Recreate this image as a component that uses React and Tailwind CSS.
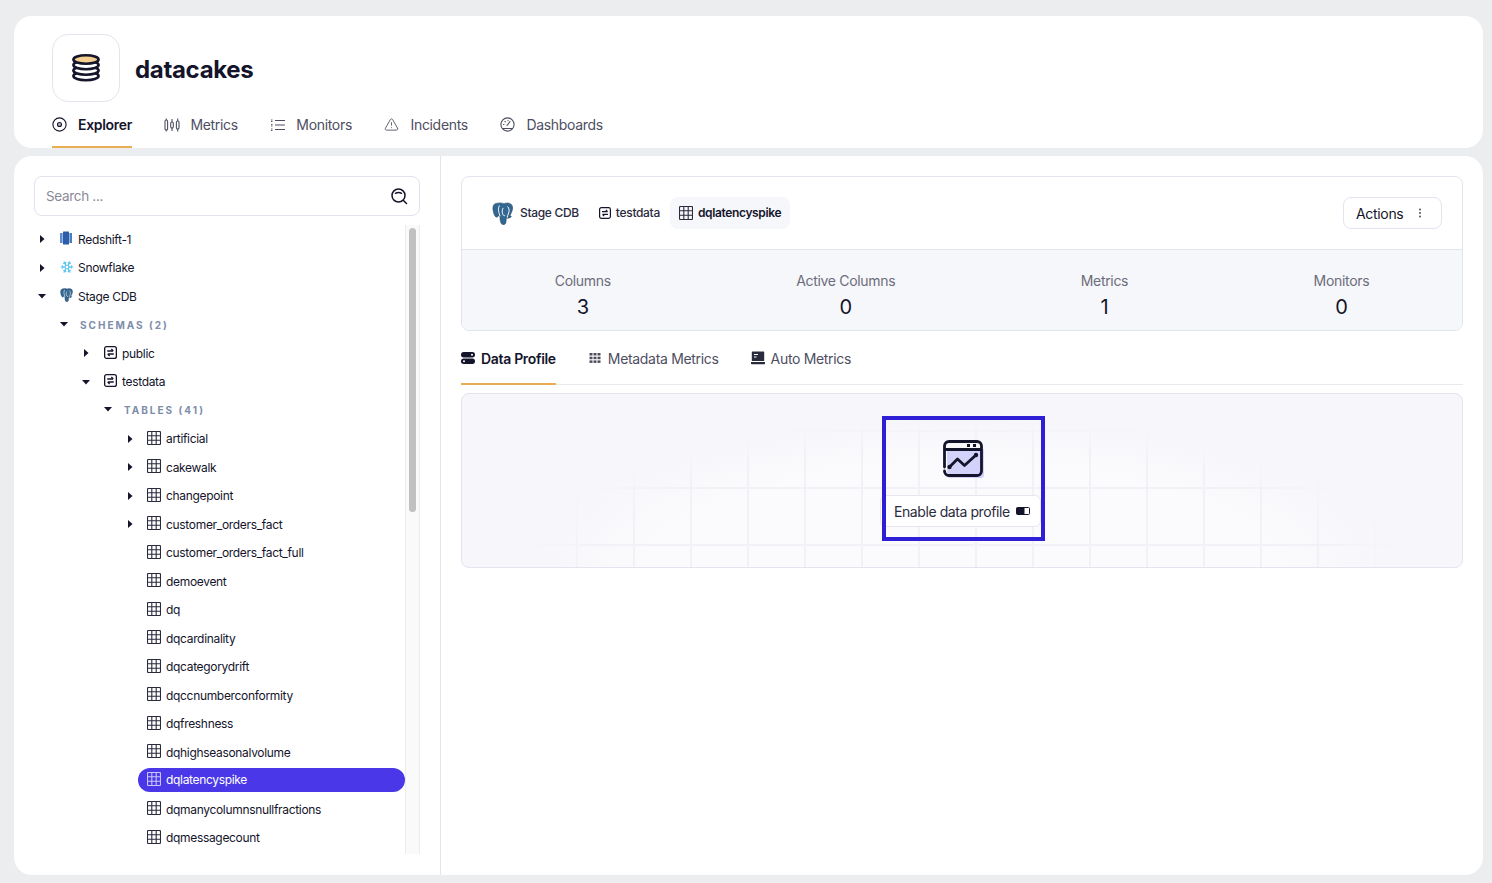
import { Snowflake, TriangleAlert } from "lucide-react";

const tables = [
  { name: "artificial", caret: true },
  { name: "cakewalk", caret: true },
  { name: "changepoint", caret: true },
  { name: "customer_orders_fact", caret: true },
  { name: "customer_orders_fact_full" },
  { name: "demoevent" },
  { name: "dq" },
  { name: "dqcardinality" },
  { name: "dqcategorydrift" },
  { name: "dqccnumberconformity" },
  { name: "dqfreshness" },
  { name: "dqhighseasonalvolume" },
  { name: "dqlatencyspike", active: true },
  { name: "dqmanycolumnsnullfractions" },
  { name: "dqmessagecount" },
];

const stats = [
  { label: "Columns", value: 3 },
  { label: "Active Columns", value: 0 },
  { label: "Metrics", value: 1 },
  { label: "Monitors", value: 0 },
];

const LogoIcon = () => (
  <svg width="30" height="30" viewBox="0 0 30 30" fill="none" stroke="#14142b" strokeWidth="2.6">
    <ellipse cx="15" cy="23" rx="12.600" ry="4.200" fill="#fff" />
    <ellipse cx="15" cy="17.500" rx="12.600" ry="4.200" fill="#fff" />
    <ellipse cx="15" cy="12" rx="12.600" ry="4.200" fill="#fff" />
    <ellipse cx="15" cy="6.500" rx="12.600" ry="4.200" fill="#f3d08f" />
  </svg>
);

const ExplorerIcon = () => (
  <svg width="15" height="15" viewBox="0 0 15 15" fill="none" stroke="#14142b" strokeWidth="1.100">
    <circle cx="7.500" cy="7.500" r="6.600" />
    <circle cx="7.500" cy="7.500" r="2" fill="#14142b" fillOpacity="0.300" />
  </svg>
);

const MetricsIcon = () => (
  <svg width="16" height="16" viewBox="0 0 16 16" fill="none" stroke="#4e4e5f" strokeWidth="1.100">
    <rect x="1" y="3" width="2.600" height="10" rx="1.300" />
    <path d="M2.300 1.500V3M2.300 13v1.500M8 2v3M8 11v3M13.700 1.500V4M13.700 12v2.500" />
    <rect x="6.700" y="5" width="2.600" height="6" rx="1.300" />
    <rect x="12.400" y="4" width="2.600" height="8" rx="1.300" />
  </svg>
);

const MonitorsIcon = () => (
  <svg width="16" height="16" viewBox="0 0 16 16" fill="none" stroke="#4e4e5f" strokeWidth="1.100">
    <path d="M5 3.500h10M5 8h10M5 12.500h10" />
    <path d="M1 3h1.500M1 4.500h1.500M1 7.500h1.500M1 9h1.500M1 12h1.500M1 13.500h1.500" strokeWidth="0.900" />
  </svg>
);

const GaugeIcon = () => (
  <svg width="15" height="15" viewBox="0 0 15 15" fill="none" stroke="#4e4e5f" strokeWidth="1.100" strokeLinecap="round">
    <circle cx="7.500" cy="7.500" r="6.600" />
    <path d="M2.500 11.500h10" />
    <path d="M7 8.500l3-4M3.500 7.500h.5M5 4.500l.3.300M8 3.300v.3" />
  </svg>
);

const SearchIcon = () => (
  <svg width="18" height="18" viewBox="0 0 18 18" fill="none" stroke="#14142b" strokeWidth="1.500" strokeLinecap="round">
    <circle cx="8.500" cy="8.500" r="6.500" />
    <path d="M5.500 6.300c1.500-1.100 4.500-1.100 6 0M13.500 13.500l3 3" />
  </svg>
);

const Caret = ({ open }) => (
  <svg width="8" height="8" viewBox="0 0 8 8" fill="#14142b">
    {open ? <path d="M0 2h8L4 6.500z" /> : <path d="M2 0l4.500 4L2 8z" />}
  </svg>
);

const RedshiftIcon = () => (
  <svg width="12" height="14" viewBox="0 0 12 14">
    <rect x="0" y="2" width="2.600" height="10" fill="#5b8ed0" />
    <rect x="3" y="0.500" width="6" height="13" rx="0.500" fill="#2b5da8" />
    <rect x="9.400" y="2" width="2.600" height="10" fill="#4a7cc4" />
  </svg>
);

const PostgresIcon = ({ size = 14 }) => (
  <svg width={size} height={size} viewBox="0 0 24 24">
    <path
      d="M4 1.500C1.800 2 .5 4.500 1 8c.5 3 1.600 7 3.300 7.700 1 .4 1.900-.4 2.500-1.400.4.500 1 .8 1.600.9-.2 2.700.2 6 1.400 7.500 1.300 1.500 3.900 1.300 4.600-.8.300-1 .4-3 .5-4.900 2 .2 3.700-.3 5-1.400.8-.700-.2-1.200-1.300-1 1-2.200 3-5.500 3-8.300 0-3.500-2.500-5.300-5.500-5.300-1.400 0-2.700.3-3.600.7C10.500.7 7 .7 4 1.500z"
      fill="#336791"
      stroke="#1f3f5e"
      strokeWidth="0.500"
    />
    <path
      d="M7.500 4c-1 2-1 5.500 0 8 .3 1 .6 2 .8 2.500M16.500 5c1.500 1.500 2 4.500.5 7.500-.7 1.300-.9 2.300-1 3.500M11.500 6.500c-1 1.500-1.200 4-.2 6.500.4 1 1 1.500 2 1.300"
      fill="none"
      stroke="#fff"
      strokeWidth="1"
      strokeLinecap="round"
    />
  </svg>
);

const SchemaIcon = ({ size = 13 }) => (
  <svg width={size} height={size} viewBox="0 0 12 12" fill="none" stroke="#14142b" strokeWidth="1.200">
    <rect x="0.600" y="0.600" width="10.800" height="10.800" rx="1.800" />
    <path d="M3 4.600h5.500M6.800 2.800l1.800 1.800M9 7.400H3.500M5.200 9.200L3.400 7.400" strokeWidth="1.200" />
  </svg>
);

const TableIcon = ({ color = "#2a2a3d", size = 14 }) => (
  <svg width={size} height={size} viewBox="0 0 14 14" fill="none" stroke={color} strokeWidth="1.100">
    <rect x="0.500" y="0.500" width="13" height="13" rx="1" />
    <path d="M0.500 4.800h13M0.500 9.200h13M4.800 0.500v13M9.200 0.500v13" />
  </svg>
);

const ServerIcon = () => (
  <svg width="14" height="14" viewBox="0 0 14 14" fill="#14142b">
    <rect x="0" y="1" width="14" height="5.500" rx="2.700" />
    <rect x="0" y="7.500" width="14" height="5.500" rx="2.700" />
    <circle cx="11" cy="3.700" r="1" fill="#fff" />
    <circle cx="3" cy="10.300" r="1" fill="#fff" />
  </svg>
);

const DotsGridIcon = () => (
  <svg width="12" height="12" viewBox="0 0 12 12" fill="#4e4e5f">
    <rect x="0.500" y="1" width="3" height="2.500" />
    <rect x="4.500" y="1" width="3" height="2.500" />
    <rect x="8.500" y="1" width="3" height="2.500" />
    <rect x="0.500" y="4.700" width="3" height="2.500" />
    <rect x="4.500" y="4.700" width="3" height="2.500" />
    <rect x="8.500" y="4.700" width="3" height="2.500" />
    <rect x="0.500" y="8.400" width="3" height="2.500" />
    <rect x="4.500" y="8.400" width="3" height="2.500" />
    <rect x="8.500" y="8.400" width="3" height="2.500" />
  </svg>
);

const AutoIcon = () => (
  <svg width="14" height="14" viewBox="0 0 14 14" fill="#2a2a3d">
    <path d="M1.500 0.500h11a.7.7 0 0 1 .7.7V10H.8V1.200a.7.7 0 0 1 .7-.7z" />
    <path d="M0 11h14v1.500a.7.7 0 0 1-.7.7H.7a.7.7 0 0 1-.7-.7z" />
    <path d="M3 3.500h4M3 6h2.500" stroke="#fff" strokeWidth="1.200" />
  </svg>
);

const ProfileIcon = () => (
  <svg width="42" height="39" viewBox="0 0 42 39" fill="none">
    <rect x="4" y="8" width="37" height="30" rx="3" fill="#d2d2fb" />
    <path
      d="M1.500 27V6a4.500 4.500 0 0 1 4.500-4.500h28A4.500 4.500 0 0 1 38.500 6v25a4.500 4.500 0 0 1-4.500 4.500H6A4.500 4.500 0 0 1 1.500 31"
      stroke="#14142b"
      strokeWidth="2.800"
      strokeLinecap="round"
    />
    <path d="M1.500 9.500h37" stroke="#14142b" strokeWidth="2.800" />
    <path d="M24 5.500h3M30 5.500h3" stroke="#14142b" strokeWidth="2.800" />
    <path
      d="M6.500 27l8-8 7 6.500L33 15"
      stroke="#14142b"
      strokeWidth="2.800"
      strokeLinecap="round"
      strokeLinejoin="round"
    />
    <circle cx="6.500" cy="27" r="2.200" fill="#14142b" />
    <circle cx="33" cy="15" r="2.200" fill="#14142b" />
  </svg>
);

const ToggleIcon = () => (
  <svg width="14" height="8" viewBox="0 0 14 8">
    <rect x="0.500" y="0.500" width="13" height="7" rx="1" fill="#fff" stroke="#14142b" />
    <rect x="0.500" y="0.500" width="8" height="7" rx="1" fill="#14142b" />
  </svg>
);

const NavItem = ({ icon, label, active }) => (
  <div
    className={`flex h-[38px] items-center gap-[10px] border-b-2 pb-[7px] text-[14px] ${
      active ? "border-[#e9ae52] font-semibold text-[#14142b]" : "border-transparent text-[#4e4e5f]"
    }`}
  >
    <div className="flex w-4 shrink-0 items-center">{icon}</div>
    <span>{label}</span>
  </div>
);

const TreeRow = ({ indent, caret, open, icon, label }) => (
  <div className={`flex h-[28.5px] shrink-0 items-center ${indent}`}>
    <div className="flex w-4 shrink-0 items-center justify-center">
      {caret && <Caret open={open} />}
    </div>
    <div className="-mt-[2px] ml-[10px] flex w-[18px] shrink-0 items-center">{icon}</div>
    <span className="mt-[1px] text-[12px] text-[#14142b]">{label}</span>
  </div>
);

const SectionRow = ({ indent, label }) => (
  <div className={`flex h-[28.5px] shrink-0 items-center ${indent}`}>
    <div className="mb-[2px] flex w-4 shrink-0 items-center justify-center">
      <Caret open />
    </div>
    <span className="ml-2 mt-[1px] text-[10px] font-bold tracking-[0.2em] text-[#7d8ca8]">{label}</span>
  </div>
);

const TableRow = ({ name, caret, active }) => (
  <div className="flex h-[28.5px] shrink-0 items-center pl-[88px]">
    <div className="flex w-4 shrink-0 items-center justify-center">{caret && <Caret />}</div>
    <div
      className={`flex h-6 flex-1 items-center gap-[5px] rounded-full pl-[9px] text-[12px] ${
        active ? "mb-[2px] bg-[#4a37e8] text-white" : "text-[#14142b]"
      }`}
    >
      <div className="-mt-[2px] shrink-0">
        <TableIcon color={active ? "#c9c5fa" : "#2a2a3d"} />
      </div>
      <span className="mt-[1px]">{name}</span>
    </div>
  </div>
);

export default function App() {
  return (
    <div className="flex h-[883px] flex-col gap-2 overflow-hidden bg-[#ecedef] pb-2 pl-[14px] pr-[9px] pt-4 font-['Inter',sans-serif] tracking-[-0.02em]">
      <header className="flex h-[132px] shrink-0 flex-col rounded-[18px] bg-white pl-[38px] pt-[18px]">
        <div className="flex items-center gap-[15px]">
          <div className="flex h-[68px] w-[68px] items-center justify-center rounded-2xl border border-[#e3e5ee]">
            <LogoIcon />
          </div>
          <h1 className="mt-1 text-[24px] font-bold text-[#14142b]">datacakes</h1>
        </div>
        <nav className="mt-[8px] flex gap-[32.5px]">
          <NavItem active label="Explorer" icon={<ExplorerIcon />} />
          <NavItem label="Metrics" icon={<MetricsIcon />} />
          <NavItem label="Monitors" icon={<MonitorsIcon />} />
          <NavItem label="Incidents" icon={<TriangleAlert size={15} strokeWidth={1.4} color="#4e4e5f" />} />
          <NavItem label="Dashboards" icon={<GaugeIcon />} />
        </nav>
      </header>

      <div className="flex min-h-0 flex-1 rounded-[18px] bg-white">
        <aside className="flex w-[427px] shrink-0 flex-col border-r border-[#e3e5ee] pl-5 pr-5 pt-5">
          <div className="flex h-10 shrink-0 items-center justify-between rounded-lg border border-[#e0e3ec] pl-[11px] pr-[11px]">
            <span className="text-[13.5px] text-[#8a8a96]">Search ...</span>
            <SearchIcon />
          </div>
          <div className="mt-[9px] flex h-[629px] overflow-hidden">
            <div className="flex min-w-0 flex-1 flex-col">
              <TreeRow indent="" caret label="Redshift-1" icon={<RedshiftIcon />} />
              <TreeRow indent="" caret label="Snowflake" icon={<Snowflake size={14} color="#5cc3f0" strokeWidth={2} />} />
              <TreeRow indent="" caret open label="Stage CDB" icon={<PostgresIcon />} />
              <SectionRow indent="pl-[22px]" label="SCHEMAS (2)" />
              <TreeRow indent="pl-[44px]" caret label="public" icon={<SchemaIcon />} />
              <TreeRow indent="pl-[44px]" caret open label="testdata" icon={<SchemaIcon />} />
              <SectionRow indent="pl-[66px]" label="TABLES (41)" />
              {tables.map((t) => (
                <TableRow key={t.name} {...t} />
              ))}
            </div>
            <div className="w-[15px] shrink-0 border-x border-[#ececec] bg-[#fafafa] px-[3px] pt-[3px]">
              <div className="h-[284px] rounded-full bg-[#c1c1c1]" />
            </div>
          </div>
        </aside>

        <main className="min-w-0 flex-1 pl-5 pr-5 pt-5">
          <section className="overflow-hidden rounded-lg border border-[#e3e5ee]">
            <div className="flex h-[72px] items-center justify-between pl-[30px] pr-5">
              <div className="flex items-center text-[12px]">
                <div className="flex items-center gap-[5px] font-medium text-[#2a2a3d]">
                  <PostgresIcon size={23} />
                  <span>Stage CDB</span>
                </div>
                <div className="ml-5 flex items-center gap-[5px] font-medium text-[#2a2a3d]">
                  <SchemaIcon size={12} />
                  <span>testdata</span>
                </div>
                <div className="ml-[10px] flex h-8 items-center gap-[5px] rounded-lg bg-[#f6f7fa] px-[9px] font-semibold text-[#14142b]">
                  <TableIcon />
                  <span className="tracking-[-0.03em]">dqlatencyspike</span>
                </div>
              </div>
              <button className="flex h-8 w-[99px] items-center gap-[15px] rounded-lg border border-[#e3e5ee] pl-[12px] text-[14px] text-[#14142b]">
                Actions
                <svg width="4" height="10" viewBox="0 0 4 10" fill="#4e4e5f">
                  <circle cx="2" cy="1.500" r="1" />
                  <circle cx="2" cy="5" r="1" />
                  <circle cx="2" cy="8.500" r="1" />
                </svg>
              </button>
            </div>
            <div className="flex h-[81px] items-start justify-around border-t border-[#e3e5ee] bg-[#f6f7fa] pt-[21px]">
              {stats.map((s) => (
                <div key={s.label} className="flex flex-col items-center">
                  <span className="text-[14px] leading-[20px] text-[#6c6c7a]">{s.label}</span>
                  <span className="mt-[2px] text-[20px] leading-[28px] text-[#14142b]">{s.value}</span>
                </div>
              ))}
            </div>
          </section>

          <div className="mt-[9px] flex h-[45px] border-b border-[#e8e9ef]">
            <div className="-mb-px flex items-center gap-[6px] border-b-2 border-[#e9ae52] pb-[7px] text-[14px] font-semibold text-[#14142b]">
              <ServerIcon />
              Data Profile
            </div>
            <div className="ml-[33px] flex items-center gap-[7px] pb-[8px] text-[14px] text-[#4e4e5f]">
              <DotsGridIcon />
              Metadata Metrics
            </div>
            <div className="ml-[32px] flex items-center gap-[6px] pb-[8px] text-[14px] text-[#4e4e5f]">
              <AutoIcon />
              Auto Metrics
            </div>
          </div>

          <section className="relative mt-2 flex h-[175px] flex-col items-center overflow-hidden rounded-lg border border-[#e3e5ee] bg-[#f6f6fb] pt-[46px]">
            <div className="absolute inset-0 bg-[radial-gradient(ellipse_440px_150px_at_50%_100%,#fbfbfd_70%,transparent_100%)]" />
            <div className="absolute inset-0 bg-[linear-gradient(to_right,#f1f1f7_2px,transparent_2px),linear-gradient(to_bottom,#f1f1f7_2px,transparent_2px)] bg-[size:57px_57px] bg-[position:0_36px] [mask-image:radial-gradient(ellipse_440px_150px_at_50%_100%,black_85%,transparent_100%)]" />
            <div className="relative flex flex-col items-center">
              <div className="ml-[3px]">
                <ProfileIcon />
              </div>
              <button className="-ml-[3px] mt-[16px] flex h-8 w-[161px] items-center justify-between whitespace-nowrap rounded-md border border-[#e6e6f0] bg-white pl-[13px] pr-[10px] text-[14px] tracking-[-0.03em] text-[#2a2a3d]">
                Enable data profile
                <ToggleIcon />
              </button>
            </div>
            <div className="absolute left-[420px] top-[22px] h-[125px] w-[163px] border-4 border-[#2e1fd6]" />
          </section>
        </main>
      </div>
    </div>
  );
}
